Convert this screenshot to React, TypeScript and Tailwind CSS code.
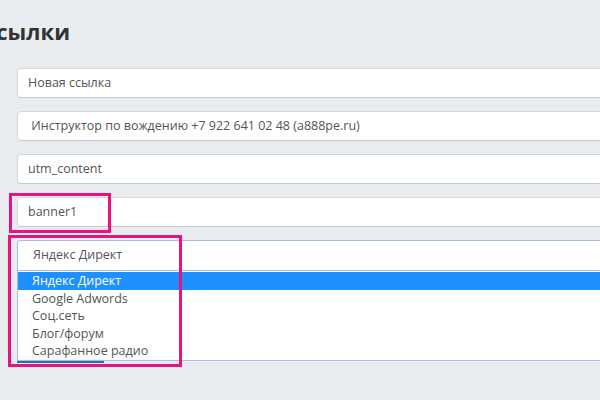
const font = { fontFamily: '"Open Sans", "Noto Sans", sans-serif' };

const fields = [
  { value: "Новая ссылка", indent: "pl-[10px]" },
  { value: " Инструктор по вождению +7 922 641 02 48 (a888pe.ru)", indent: "pl-[10px]" },
  { value: "utm_content", indent: "pl-[10px]" },
  { value: "banner1", indent: "pl-[10px]" },
];

const sources = ["Яндекс Директ", "Google Adwords", "Соц.сеть", "Блог/форум", "Сарафанное радио"];

function Field({ value, indent }: { value: string; indent: string }) {
  return (
    <div
      className={`flex h-[30px] w-[620px] items-center whitespace-pre rounded-[4px] border border-[#d4d6d9] border-b-[#c6c8cb] bg-white text-[12.5px] text-[#555] ${indent}`}
    >
      {value}
    </div>
  );
}

export default function App() {
  return (
    <div className="relative h-[400px] w-[600px] overflow-hidden bg-[#e9ecef]" style={font}>
      {/* heading is scrolled off to the left in the shot */}
      <h1 className="ml-[-15px] pt-[16px] text-[22px] font-bold leading-[30px] whitespace-nowrap text-[#333]">ссылки</h1>

      <div className="mt-[22px] flex flex-col gap-[13px] pl-[17px]">
        {fields.map(f => (
          <Field key={f.value} {...f} />
        ))}

        <div className="flex w-[620px] flex-col">
          <div className="flex h-[31px] items-center rounded-t-[3px] border border-[#a9bde6] bg-white pl-[15px] text-[12.5px] text-[#555]">
            Яндекс Директ
          </div>
          <div className="relative flex h-[90px] flex-col border-x border-b border-[#a9bde6] bg-white pt-[1px]">
            {sources.map((s, i) => (
              <div
                key={s}
                className={
                  i === 0
                    ? "flex h-[18px] items-center bg-[#1e90ff] pl-[14px] text-[12.5px] leading-none text-white"
                    : "flex h-[17.5px] items-center pl-[14px] text-[12.5px] leading-none text-[#555]"
                }
              >
                {s}
              </div>
            ))}
            <div className="absolute bottom-[-3px] left-[-1px] h-[2px] w-[87px] bg-[#2a6fb8]" />
          </div>
        </div>
      </div>

      <div className="pointer-events-none absolute left-[9px] top-[193px] h-[40px] w-[102px] border-[3px] border-[#e8137e]" />
      <div className="pointer-events-none absolute left-[8px] top-[235px] h-[132px] w-[174px] border-[3px] border-[#e8137e]" />
    </div>
  );
}
